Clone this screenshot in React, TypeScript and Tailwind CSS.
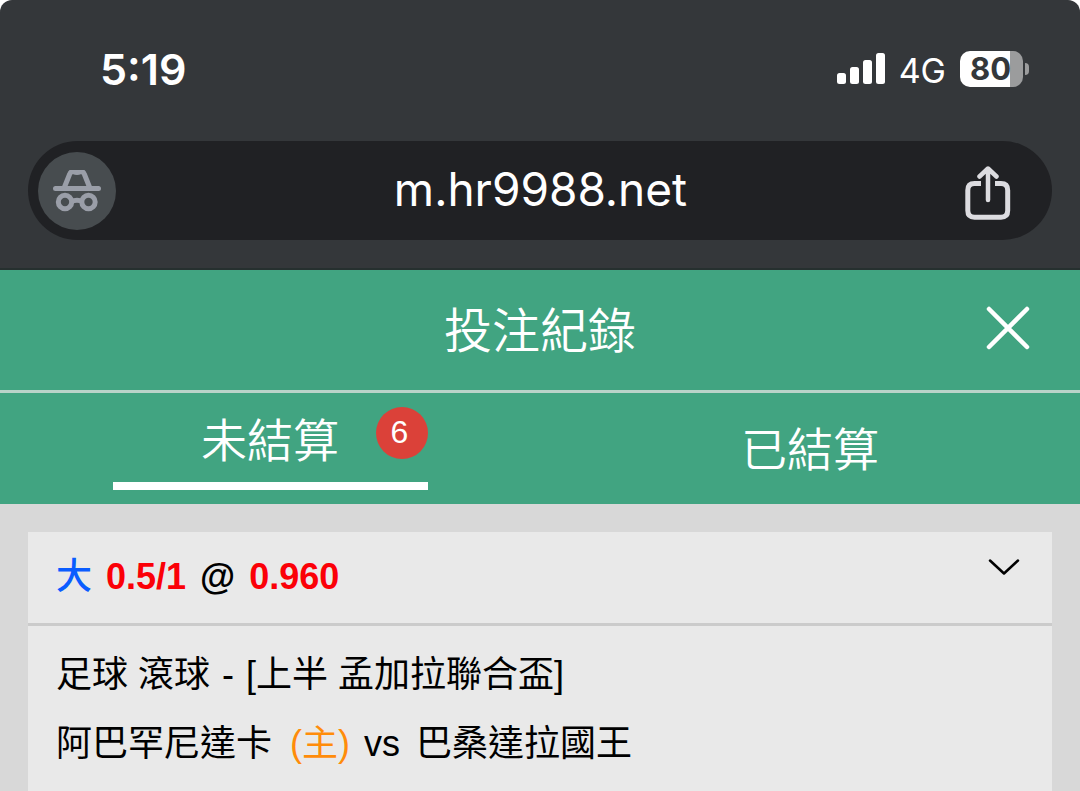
const CJK = `font-['Liberation_Sans','Noto_Sans_CJK_TC',sans-serif]`;

interface Bet {
  id: number;
  pick: string;
  line: string;
  odds: string;
  sport: string;
  league: string;
  home: string;
  away: string;
}

const bets: Bet[] = [
  {
    id: 1,
    pick: '大',
    line: '0.5/1',
    odds: '0.960',
    sport: '足球 滾球',
    league: '[上半 孟加拉聯合盃]',
    home: '阿巴罕尼達卡',
    away: '巴桑達拉國王',
  },
];

export default function App() {
  return (
    <div className={`min-h-screen bg-[#d8d8d8] ${CJK}`}>
      {/* 瀏覽器 */}
      <div className="bg-white">
        <div className="rounded-t-xl border-b-2 border-[#26302f] bg-[#34373a] pb-7">
          <StatusBar />
          <AddressBar />
        </div>
      </div>

      {/* 標題 */}
      <header className="relative flex h-[123px] items-center justify-center border-b-3 border-[#b9d3c9] bg-[#41a481] text-white">
        <h1 className="pt-1 text-5xl font-[350]">投注紀錄</h1>
        <button className="absolute right-[50px] pb-1" aria-label="關閉">
          <CloseIcon />
        </button>
      </header>

      {/* 分頁 */}
      <nav className="grid h-[111px] grid-cols-2 justify-items-center bg-[#41a481] text-[46px] font-[350] text-white">
        <button className="relative mb-3.5 w-7/12 border-b-8 border-white pt-2">
          未結算
          <span className="absolute top-3.5 right-0 flex size-13 items-center justify-center rounded-full bg-[#db4139] pr-1 pb-0.5 text-[32px]">
            6
          </span>
        </button>
        <button className="w-7/12 pt-1">已結算</button>
      </nav>

      {/* 注單列表 */}
      <main className="p-7 pb-0">
        {bets.map((bet) => (
          <BetCard key={bet.id} bet={bet} />
        ))}
      </main>
    </div>
  );
}

function BetCard({ bet }: { bet: Bet }) {
  return (
    <section className="bg-[#e9e9e9] text-4xl text-black">
      <div className="flex h-[94px] items-center justify-between border-b-3 border-[#cbcbcb] px-7 pb-0.5">
        <div className="flex items-center gap-3.5 font-bold">
          <span className="font-medium text-[#0a5cff]">{bet.pick}</span>
          <span className="text-[#fb0007]">{bet.line}</span>
          <span>@</span>
          <span className="text-[#fb0007]">{bet.odds}</span>
        </div>
        <button className="pr-1 pb-5" aria-label="展開">
          <ChevronIcon />
        </button>
      </div>
      <div className="px-7 pt-3.5 pb-6 leading-[69px]">
        <p>
          {bet.sport} <span className="mx-0.5">-</span> {bet.league}
        </p>
        <p>
          {bet.home} <span className="mr-1 ml-2 text-[#ff8c0a]">(主)</span> vs{' '}
          <span className="ml-1.5">{bet.away}</span>
        </p>
      </div>
    </section>
  );
}

function StatusBar() {
  return (
    <div className="flex h-[141px] items-center justify-between pr-[51px] pb-1 pl-[100px] font-[Inter,sans-serif] text-white">
      <span className="pt-0.5 text-[43px] font-semibold">5:19</span>
      <div className="flex items-center gap-3.5">
        <SignalIcon />
        <span className="pt-1 text-[34px]">4G</span>
        <div className="flex items-center gap-0.5">
          <div className="flex h-9 w-[63px] items-center justify-center rounded-[10px] bg-linear-to-r from-white from-80% to-[#9b9c9d] to-80% pt-0.5 pr-0.5 text-[31px] font-bold text-[#34373a]">
            80
          </div>
          <div className="h-3 w-1 rounded-r-full bg-[#9b9c9d]" />
        </div>
      </div>
    </div>
  );
}

function AddressBar() {
  return (
    <div className="mx-7 flex h-[99px] items-center justify-between rounded-full bg-[#202124] pr-[41px] pl-2.5">
      <div className="flex size-[78px] items-center justify-center rounded-full bg-[#474c4f]">
        <IncognitoIcon />
      </div>
      <button className="pb-0.5 font-[Inter,sans-serif] text-[46px] text-white">m.hr9988.net</button>
      <button className="pt-1" aria-label="分享">
        <ShareIcon />
      </button>
    </div>
  );
}

function SignalIcon() {
  return (
    <svg className="h-8 w-12" viewBox="0 0 48 32" fill="currentColor">
      <rect x="0" y="20" width="9" height="11" rx="2.5" />
      <rect x="13" y="14" width="9" height="17" rx="2.5" />
      <rect x="26" y="7" width="9" height="24" rx="2.5" />
      <rect x="39" y="0" width="9" height="31" rx="2.5" />
    </svg>
  );
}

function IncognitoIcon() {
  return (
    <svg className="h-[42px] w-12 text-[#9a9ea8]" viewBox="0 0 48 42" fill="none" stroke="currentColor">
      <path
        d="M11.500 17 16.500 4.500Q17.800 1 20.500 1.800Q24 3.200 27.500 1.800Q30.200 1 31.500 4.500L36.500 17"
        strokeWidth="5"
      />
      <path d="M2.500 18.500h43" strokeWidth="5" strokeLinecap="round" />
      <circle cx="12" cy="32" r="6.700" strokeWidth="5" />
      <circle cx="35.500" cy="32" r="6.700" strokeWidth="5" />
      <path d="M18 32Q24 28.500 30 32" strokeWidth="5" />
    </svg>
  );
}

function ShareIcon() {
  return (
    <svg className="h-[54px] w-[46px] text-[#dcdce0]" viewBox="0 0 46 54" fill="none" stroke="currentColor">
      <path
        d="M16 17.500H9.500Q2.800 17.500 2.800 24.200V44.500Q2.800 51.200 9.500 51.200H36Q42.700 51.200 42.700 44.500V24.200Q42.700 17.500 36 17.500H30"
        strokeWidth="5"
      />
      <path d="M23 3V34M14.500 10.500 23 2.500 31.500 10.500" strokeWidth="4.500" strokeLinecap="round" strokeLinejoin="round" />
    </svg>
  );
}

function CloseIcon() {
  return (
    <svg className="size-11" viewBox="0 0 44 44" fill="none" stroke="currentColor">
      <path d="M3 3 41 41M41 3 3 41" strokeWidth="4.500" strokeLinecap="round" />
    </svg>
  );
}

function ChevronIcon() {
  return (
    <svg className="h-4 w-8" viewBox="0 0 32 16" fill="none" stroke="currentColor">
      <path d="M2 1.500 16 14.500 30 1.500" strokeWidth="2.500" strokeLinecap="round" strokeLinejoin="round" />
    </svg>
  );
}
